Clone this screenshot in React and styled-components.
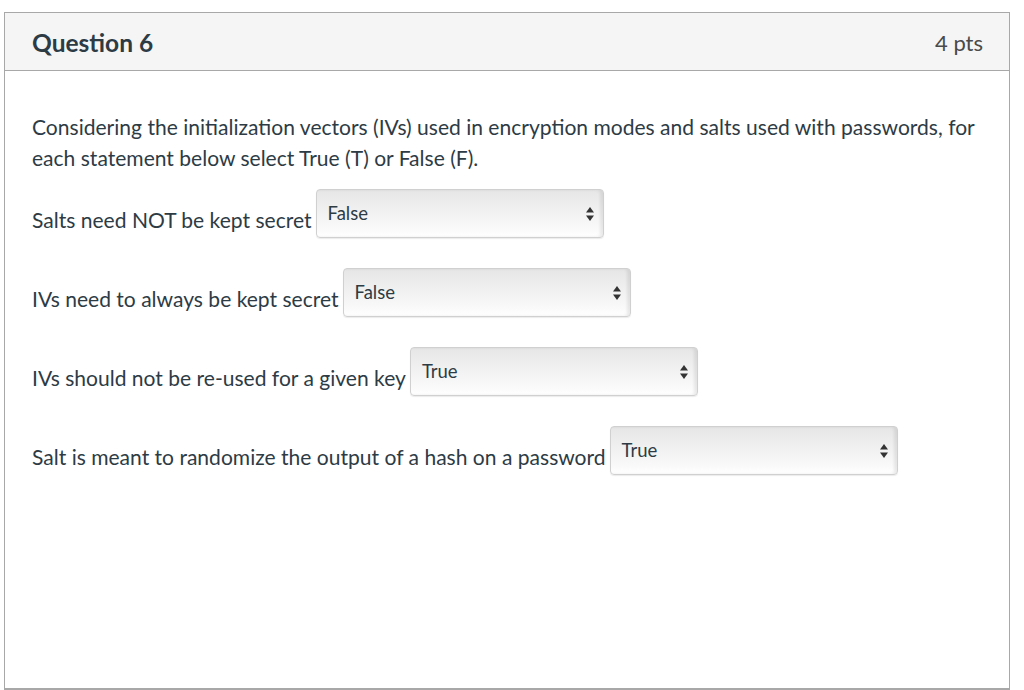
import React from 'react'
import styled, { createGlobalStyle } from 'styled-components'

const GlobalStyle = createGlobalStyle`
  body {
    margin: 0;
    background: #fff;
    font-family: Lato, "Open Sans", sans-serif;
    color: #2d3b45;
  }
`

const QuestionBox = styled.div`
  box-sizing: border-box;
  margin: 12px 0 0 4px;
  width: 1006px;
  height: 678px;
  border: 1px solid #a8a8a8;
  border-bottom: 2px solid #a8a8a8;
  display: flex;
  flex-direction: column;
`

const Header = styled.div`
  height: 58px;
  box-sizing: border-box;
  background: #f5f5f5;
  border-bottom: 1px solid #a8a8a8;
  display: flex;
  align-items: center;
  justify-content: space-between;
  padding: 1px 26px 0 27px;
`

const Title = styled.h2`
  margin: 0;
  font-size: 24.5px;
  font-weight: 700;
  color: #2d3b45;
`

const Points = styled.div`
  font-size: 22px;
  color: #4a4a4a;
`

const Body = styled.div`
  padding: 40px 27px 0;
`

const Intro = styled.p`
  margin: 0 0 16px;
  font-size: 21.05px;
  line-height: 31px;
`

const Row = styled.div`
  display: flex;
  align-items: flex-start;
  gap: 4px;
  margin-bottom: 30px;
`

const Label = styled.span`
  font-size: 21.05px;
  line-height: 24px;
  margin-top: 19px;
`

const SelectBox = styled.div`
  box-sizing: border-box;
  width: 288px;
  height: 49px;
  border: 1px solid #d0d0d0;
  border-radius: 4px;
  background: linear-gradient(#e6e6e6, #fafafa 85%, #fff);
  box-shadow: inset -3px 0 3px rgba(0, 0, 0, 0.08), 0 1px 1px rgba(0, 0, 0, 0.08);
  display: flex;
  align-items: center;
  justify-content: space-between;
  padding: 0 9px 0 11px;
  font-size: 18.5px;
  color: #2d3b45;
`

const SelectText = styled.span`
  margin-top: -1px;
`

const Arrows = () => (
  <svg width="8" height="14" viewBox="0 0 8 14">
    <path d="M4 0 L8 5.5 L0 5.5 Z" fill="#333" />
    <path d="M4 14 L8 8.5 L0 8.5 Z" fill="#333" />
  </svg>
)

const statements = [
  { text: 'Salts need NOT be kept secret', answer: 'False' },
  { text: 'IVs need to always be kept secret', answer: 'False' },
  { text: 'IVs should not be re-used for a given key', answer: 'True' },
  { text: 'Salt is meant to randomize the output of a hash on a password', answer: 'True' },
]

export default function App() {
  return (
    <>
      <GlobalStyle />
      <QuestionBox>
        <Header>
          <Title>Question 6</Title>
          <Points>4 pts</Points>
        </Header>
        <Body>
          <Intro>
            Considering the initialization vectors (IVs) used in encryption modes and salts used with passwords, for
            each statement below select True (T) or False (F).
          </Intro>
          {statements.map((s, i) => (
            <Row key={i}>
              <Label>{s.text}</Label>
              <SelectBox>
                <SelectText>{s.answer}</SelectText>
                <Arrows />
              </SelectBox>
            </Row>
          ))}
        </Body>
      </QuestionBox>
    </>
  )
}
